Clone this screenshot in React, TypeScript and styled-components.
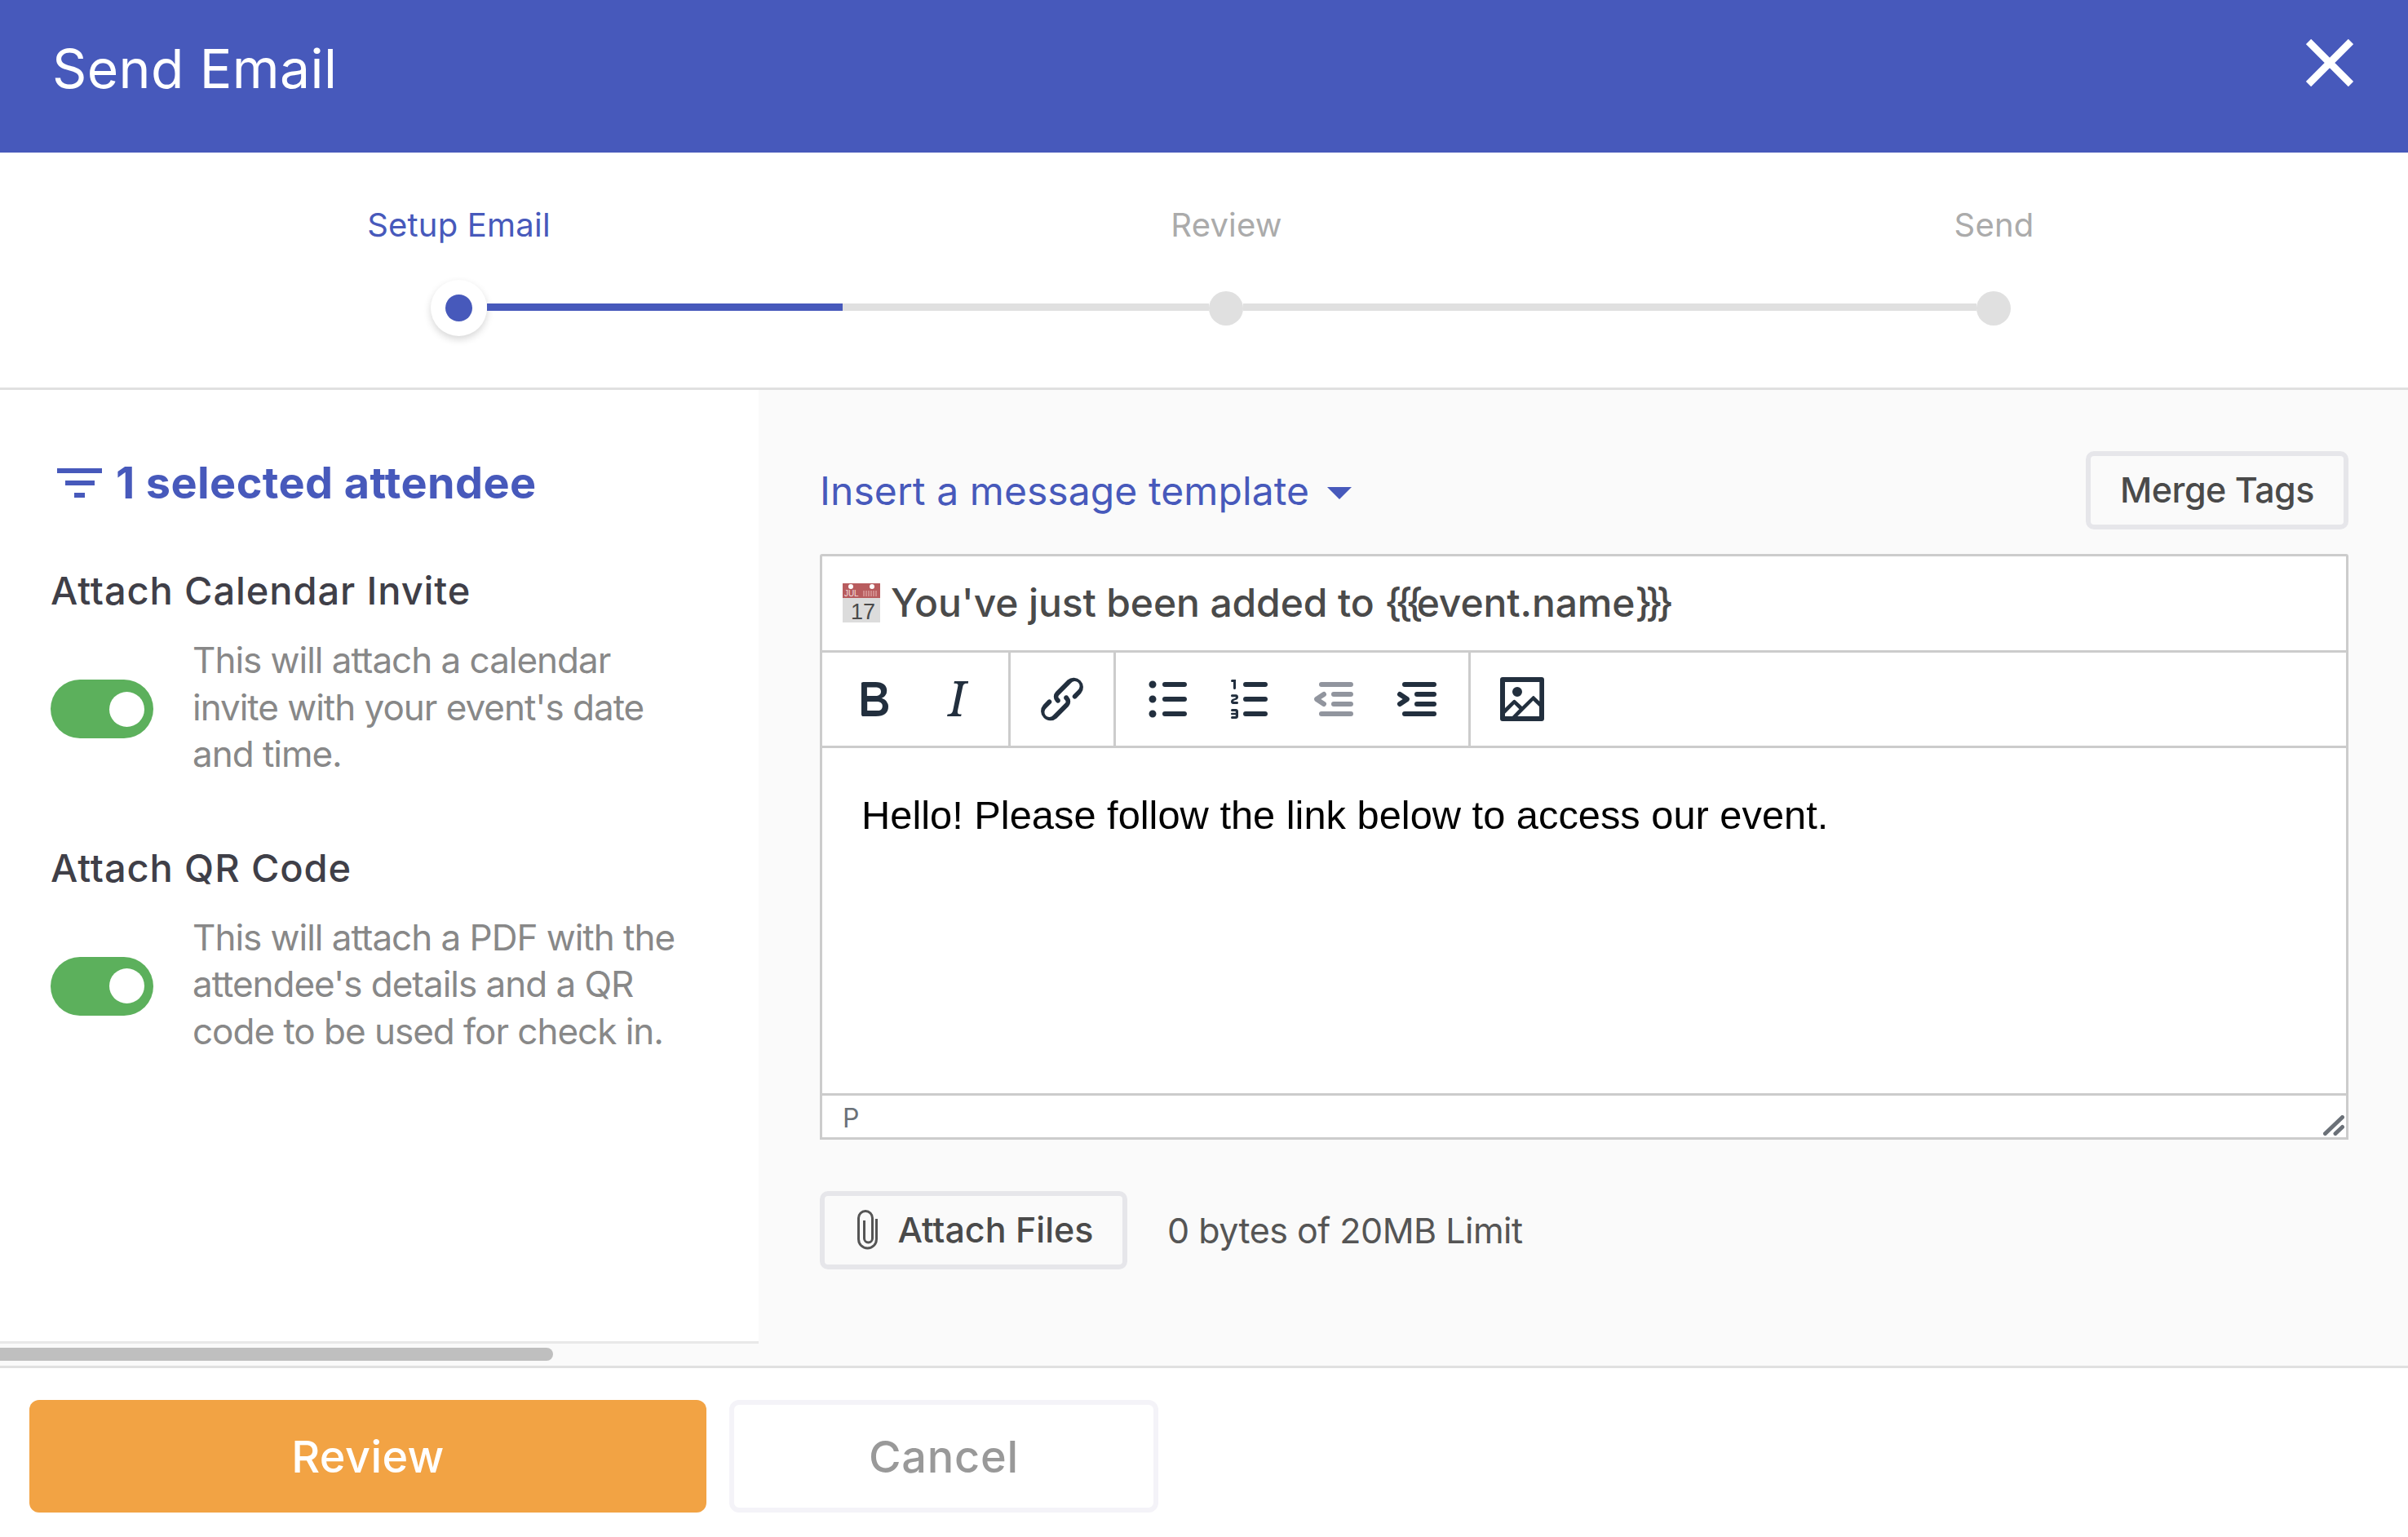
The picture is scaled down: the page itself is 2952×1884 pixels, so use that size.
import styled, { createGlobalStyle } from 'styled-components';

const BLUE = '#4759bb';
const INK = '#222f3e';

const GlobalStyle = createGlobalStyle`
  html, body {
    margin: 0;
    padding: 0;
    background: #fff;
    overflow: hidden;
  }
  body {
    font-family: Inter, "Liberation Sans", sans-serif;
  }
  * {
    box-sizing: border-box;
  }
`;

const Page = styled.div`
  display: flex;
  flex-direction: column;
  width: 2952px;
  height: 1884px;
`;

const Header = styled.header`
  display: flex;
  justify-content: space-between;
  align-items: flex-start;
  height: 187px;
  padding: 42px 67px 0 64px;
  background: ${BLUE};
`;

const Title = styled.h1`
  margin: 0;
  font-size: 66px;
  line-height: 84px;
  font-weight: 400;
  letter-spacing: 0.4px;
  color: #fff;
`;

const CloseIcon = styled.svg`
  display: block;
  width: 58px;
  height: 58px;
  margin-top: 6px;
`;

const Stepper = styled.section`
  display: flex;
  flex-direction: column;
  height: 291px;
  padding-top: 64px;
  border-bottom: 3px solid #e0e0e0;
`;

const StepLabels = styled.div`
  display: grid;
  grid-template-columns: repeat(3, 941px);
  padding-left: 92px;
`;

const StepLabel = styled.span<{ $active?: boolean }>`
  text-align: center;
  font-size: 40px;
  line-height: 50px;
  letter-spacing: 0.2px;
  color: ${(p) => (p.$active ? BLUE : '#ababab')};
`;

const Rail = styled.div`
  display: flex;
  align-items: center;
  width: 1937px;
  margin: 42px 0 0 528px;
`;

const CurrentDot = styled.div`
  display: flex;
  align-items: center;
  justify-content: center;
  flex: none;
  width: 69px;
  height: 69px;
  border-radius: 50%;
  background: #fff;
  box-shadow: 0 4px 10px rgba(0, 0, 0, 0.16);

  &::after {
    content: '';
    width: 33px;
    height: 33px;
    border-radius: 50%;
    background: ${BLUE};
  }
`;

const PendingDot = styled.div`
  flex: none;
  width: 42px;
  height: 42px;
  border-radius: 50%;
  background: #e0e0e0;
`;

const RailLine = styled.div<{ $length: number }>`
  flex: none;
  width: ${(p) => p.$length}px;
  height: 9px;
  margin-top: -2px;
  background: #e0e0e0;
`;

const RailFill = styled.div`
  height: 100%;
  background: ${BLUE};
`;

const Main = styled.main`
  display: flex;
  height: 1196px;
`;

const Side = styled.aside`
  display: flex;
  flex-direction: column;
  flex: none;
  width: 930px;
  background: #fff;
`;

const SideContent = styled.div`
  flex: 1;
  padding: 88px 0 0 62px;
`;

const SelectedRow = styled.div`
  display: flex;
  align-items: center;
  gap: 17px;
  height: 52px;
  margin-bottom: 2px;
  padding-left: 8px;
  color: ${BLUE};
`;

const SelectedText = styled.span`
  font-size: 54px;
  line-height: 52px;
  font-weight: 700;
  letter-spacing: 0.4px;
`;

const Option = styled.div`
  margin-top: 76px;
`;

const OptionTitle = styled.h2`
  margin: 0 0 27px;
  font-size: 47px;
  line-height: 60px;
  font-weight: 500;
  letter-spacing: 0.9px;
  color: #3f3f48;
`;

const OptionBody = styled.div`
  display: flex;
  align-items: center;
  gap: 48px;
`;

const Toggle = styled.div`
  display: flex;
  align-items: center;
  justify-content: flex-end;
  flex: none;
  width: 126px;
  height: 72px;
  padding-right: 11px;
  border-radius: 36px;
  background: #5cb05c;

  &::after {
    content: '';
    width: 43px;
    height: 43px;
    border-radius: 50%;
    background: #fff;
  }
`;

const OptionText = styled.p`
  margin: 0 0 4px;
  font-size: 44px;
  line-height: 57.5px;
  letter-spacing: -1.02px;
  color: #888;
`;

const ScrollStrip = styled.div`
  flex: none;
  height: 30px;
  padding-top: 5px;
  border-top: 3px solid #e8e8e8;
  background: #fafafa;
`;

const ScrollThumb = styled.div`
  width: 678px;
  height: 16px;
  border-radius: 0 8px 8px 0;
  background: #bfbfbf;
`;

const Content = styled.div`
  flex: 1;
  padding: 75px 73px 0 75px;
  background: #fafafa;
`;

const TemplateRow = styled.div`
  display: flex;
  justify-content: space-between;
  align-items: center;
`;

const TemplateLink = styled.div`
  display: flex;
  align-items: center;
  gap: 22px;
  font-size: 48px;
  letter-spacing: 0.08px;
  color: ${BLUE};
`;

const Caret = styled.span`
  width: 0;
  height: 0;
  margin-top: 6px;
  border-left: 15px solid transparent;
  border-right: 15px solid transparent;
  border-top: 15px solid ${BLUE};
`;

const OutlineButton = styled.div`
  display: flex;
  align-items: center;
  justify-content: center;
  height: 96px;
  padding-bottom: 2px;
  border: 6px solid #e6e6ea;
  border-radius: 10px;
  font-size: 43px;
  font-weight: 500;
  color: #4a4a4a;
`;

const MergeButton = styled(OutlineButton)`
  width: 322px;
  letter-spacing: -0.5px;
`;

const Editor = styled.div`
  margin-top: 30px;
  border: 3px solid #ccc;
  border-radius: 3px 3px 0 0;
  background: #fff;
`;

const Subject = styled.div`
  display: flex;
  align-items: center;
  gap: 13px;
  height: 118px;
  padding: 0 0 2px 25px;
  border-bottom: 3px solid #ccc;
  font-size: 48px;
  font-weight: 500;
  letter-spacing: -0.12px;
  color: #4a4a4a;
`;

const Braces = styled.span`
  letter-spacing: -8px;
`;

const Toolbar = styled.div`
  display: flex;
  height: 117px;
  border-bottom: 3px solid #ccc;
`;

const ToolGroup = styled.div`
  display: flex;
  align-items: center;
  gap: 30px;
  padding: 0 27px;
  border-right: 3px solid #ccc;

  &:last-child {
    border-right: 0;
  }
`;

const ToolIcon = styled.svg<{ $muted?: boolean }>`
  display: block;
  width: 72px;
  height: 72px;
  fill: ${(p) => (p.$muted ? '#91959e' : INK)};
`;

const EditorBody = styled.div`
  height: 426px;
  padding: 49px 48px 0;
  border-bottom: 3px solid #ccc;
  font-family: "Liberation Sans", Arial, sans-serif;
  font-size: 48.8px;
  line-height: 66px;
  color: #000;
`;

const StatusBar = styled.div`
  display: flex;
  justify-content: space-between;
  align-items: flex-end;
  height: 51px;
  padding: 0 2px 2px 25px;
  font-size: 32px;
  line-height: 42px;
  color: #6b7178;
`;

const AttachRow = styled.div`
  display: flex;
  align-items: center;
  gap: 49px;
  margin-top: 63px;
`;

const AttachButton = styled(OutlineButton)`
  gap: 25px;
  width: 377px;
  padding-left: 4px;
`;

const AttachLimit = styled.span`
  font-size: 43px;
  letter-spacing: -0.5px;
  color: #555;
`;

const Footer = styled.footer`
  display: flex;
  gap: 28px;
  height: 207px;
  padding: 39px 36px;
  border-top: 3px solid #e0e0e0;
`;

const PrimaryButton = styled.div`
  display: flex;
  align-items: center;
  justify-content: center;
  width: 830px;
  height: 138px;
  border-radius: 12px;
  background: #f2a344;
  font-size: 54px;
  font-weight: 500;
  letter-spacing: 0.4px;
  color: #fff;
`;

const CancelButton = styled(PrimaryButton)`
  width: 526px;
  border: 6px solid #f4f3f8;
  background: #fff;
  letter-spacing: 0.8px;
  color: #999;
`;

const ICONS = {
  bold: 'M7.8 19c-.3 0-.5 0-.6-.2l-.2-.5V5.7c0-.2 0-.4.2-.5l.6-.2h5c1.5 0 2.7.3 3.5 1 .7.6 1.1 1.4 1.1 2.5a3 3 0 0 1-.6 1.9c-.4.6-1 1-1.6 1.2.4.1.9.3 1.3.6s.8.7 1 1.2c.4.4.5 1 .5 1.6 0 1.3-.4 2.3-1.3 3-.8.7-2.1 1-3.8 1H7.8zm5-8.3c.6 0 1.2-.1 1.6-.5.4-.3.6-.7.6-1.3 0-1.1-.8-1.7-2.4-1.7H9.3v3.500h3.500zm.5 6c.7 0 1.300-.1 1.700-.4.4-.4.6-.9.6-1.500s-.2-1-.7-1.400c-.4-.3-1-.4-2-.4H9.400v3.700h3.900z',
  italic: 'M16.7 4.700l-.1.9h-.3c-.6 0-1 0-1.400.3-.3.3-.4.6-.5 1.100l-2.100 9.800v.6c0 .5.4.8 1.400.8h.2l-.2.8H8l.2-.8h.2c1.100 0 1.800-.5 2-1.500l2-9.800.1-.5c0-.6-.4-.8-1.400-.8h-.3l.2-.9h5.800z',
  link: 'M6.200 12.300a1 1 0 0 1 1.400 1.400l-2 2a2 2 0 1 0 2.800 2.800l4.800-4.800a1 1 0 0 0 0-1.400 1 1 0 1 1 1.400-1.300 2.900 2.900 0 0 1 0 4L9.800 19.800a3.900 3.900 0 0 1-5.500-5.500l1.900-2zm11.600-.6a1 1 0 0 1-1.400-1.400l2-2a2 2 0 1 0-2.800-2.800L10.800 10.300a1 1 0 0 0 0 1.400A1 1 0 1 1 9.400 13a2.900 2.900 0 0 1 0-4l4.800-4.800a3.900 3.900 0 0 1 5.500 5.500l-1.900 2z',
  bullets: 'M11 5h8c.6 0 1 .4 1 1s-.4 1-1 1h-8a1 1 0 0 1 0-2zm0 6h8c.6 0 1 .4 1 1s-.4 1-1 1h-8a1 1 0 0 1 0-2zm0 6h8c.6 0 1 .4 1 1s-.4 1-1 1h-8a1 1 0 0 1 0-2zM4.500 6a1.500 1.500 0 1 0 3 0 1.500 1.500 0 1 0-3 0zm0 6a1.500 1.500 0 1 0 3 0 1.500 1.500 0 1 0-3 0zm0 6a1.500 1.500 0 1 0 3 0 1.500 1.500 0 1 0-3 0z',
  numbers: 'M10 17h8c.6 0 1 .4 1 1s-.4 1-1 1h-8a1 1 0 0 1 0-2zm0-6h8c.6 0 1 .4 1 1s-.4 1-1 1h-8a1 1 0 0 1 0-2zm0-6h8c.6 0 1 .4 1 1s-.4 1-1 1h-8a1 1 0 1 1 0-2zM6 4v3.500c0 .3-.2.500-.5.500a.5.500 0 0 1-.5-.5V5h-.5a.5.500 0 0 1 0-1H6zm-1 8.800l.2.200h1.300c.3 0 .5.200.5.500s-.2.500-.5.500H4.900a1 1 0 0 1-.9-1V13c0-.4.3-.8.6-1l1.200-.4.200-.3a.2.200 0 0 0-.2-.2H4.500a.5.500 0 0 1-.5-.5c0-.3.200-.5.500-.5h1.600c.5 0 .9.400.9 1v.1c0 .4-.3.800-.6 1l-1.200.4-.2.300zM7 17v2c0 .6-.4 1-1 1H4.500a.5.500 0 0 1 0-1h1.200c.2 0 .3-.1.3-.3 0-.2-.1-.3-.3-.3H4.400a.4.400 0 1 1 0-.8h1.300c.2 0 .3-.1.3-.3 0-.2-.1-.3-.3-.3H4.500a.5.500 0 1 1 0-1H6c.6 0 1 .4 1 1z',
  outdent: 'M7 5h12c.6 0 1 .4 1 1s-.4 1-1 1H7a1 1 0 1 1 0-2zm5 4h7c.6 0 1 .4 1 1s-.4 1-1 1h-7a1 1 0 0 1 0-2zm0 4h7c.6 0 1 .4 1 1s-.4 1-1 1h-7a1 1 0 0 1 0-2zm-5 4h12a1 1 0 0 1 0 2H7a1 1 0 0 1 0-2zm1.600-3.800a1 1 0 0 1-1.200 1.600l-3-2a1 1 0 0 1 0-1.600l3-2a1 1 0 0 1 1.200 1.600L6.800 12l1.800 1.200z',
  indent: 'M7 5h12c.6 0 1 .4 1 1s-.4 1-1 1H7a1 1 0 1 1 0-2zm5 4h7c.6 0 1 .4 1 1s-.4 1-1 1h-7a1 1 0 0 1 0-2zm0 4h7c.6 0 1 .4 1 1s-.4 1-1 1h-7a1 1 0 0 1 0-2zm-5 4h12a1 1 0 0 1 0 2H7a1 1 0 0 1 0-2zm-2.600-3.800L6.200 12l-1.800-1.200a1 1 0 0 1 1.200-1.600l3 2a1 1 0 0 1 0 1.600l-3 2a1 1 0 1 1-1.200-1.600z',
  image: 'M5 15.700l3.300-3.200c.3-.3.700-.3 1 0L12 15l4.100-4c.3-.4.800-.4 1 0l2 1.900V5H5v10.700zM5 18v1h3l2.800-2.900-2-2L5 17.900zm14-3l-2.500-2.400-6.400 6.400H19v-4zM4 3h16c.6 0 1 .4 1 1v16c0 .6-.4 1-1 1H4a1 1 0 0 1-1-1V4c0-.6.4-1 1-1zm6 8a2 2 0 1 0 0-4 2 2 0 0 0 0 4z',
};

const Tool = ({ d, muted }: { d: string; muted?: boolean }) => (
  <ToolIcon viewBox="0 0 24 24" $muted={muted}>
    <path fillRule="evenodd" d={d} />
  </ToolIcon>
);

const FilterIcon = () => (
  <svg width="55" height="36" viewBox="0 0 55 36" fill={BLUE}>
    <rect x="0" y="0" width="55" height="6" />
    <rect x="10" y="15" width="36" height="6" />
    <rect x="21" y="30" width="13" height="6" />
  </svg>
);

const CalendarEmoji = () => (
  <svg width="46" height="48" viewBox="0 0 46 48">
    <rect width="46" height="48" fill="#dcdcdc" />
    <rect width="46" height="18" fill="#b85c5e" />
    <circle cx="10" cy="4" r="3" fill="#fff" />
    <circle cx="36" cy="4" r="3" fill="#fff" />
    <text x="2" y="16" fontSize="10" fill="#f3dede" fontFamily="Liberation Sans, sans-serif">
      JUL
    </text>
    <path d="M26 9v7M29 9v7M32 9v7M35 9v7M38 9v7M41 9v7" stroke="#d99b9b" strokeWidth="1.500" />
    <text x="10" y="44" fontSize="27" fill="#4a4a4a" fontFamily="Liberation Sans, sans-serif">
      17
    </text>
  </svg>
);

const PaperclipIcon = () => (
  <svg width="25" height="49" viewBox="0 0 25 49" fill="none" stroke="#555" strokeWidth="3">
    <path d="M23.500 11V36a11 11 0 0 1-22 0V10a8.500 8.500 0 0 1 17 0V35a5 5 0 0 1-10 0V13" />
  </svg>
);

const ResizeHandle = () => (
  <svg width="26" height="25" viewBox="0 0 26 25" stroke="#6b7178" strokeWidth="5" strokeLinecap="round">
    <path d="M2.500 22.500L23.500 2.500M15 22.500L23.500 14.500" />
  </svg>
);

const App = () => (
  <Page>
    <GlobalStyle />
    <Header>
      <Title>Send Email</Title>
      <CloseIcon viewBox="0 0 58 58" stroke="#fff" strokeWidth="9">
        <path d="M3 3L55 55M55 3L3 55" />
      </CloseIcon>
    </Header>

    <Stepper>
      <StepLabels>
        <StepLabel $active>Setup Email</StepLabel>
        <StepLabel>Review</StepLabel>
        <StepLabel>Send</StepLabel>
      </StepLabels>
      <Rail>
        <CurrentDot />
        <RailLine $length={885}>
          <RailFill style={{ width: 436 }} />
        </RailLine>
        <PendingDot />
        <RailLine $length={899} />
        <PendingDot />
      </Rail>
    </Stepper>

    <Main>
      <Side>
        <SideContent>
          <SelectedRow>
            <FilterIcon />
            <SelectedText>1 selected attendee</SelectedText>
          </SelectedRow>
          <Option>
            <OptionTitle>Attach Calendar Invite</OptionTitle>
            <OptionBody>
              <Toggle />
              <OptionText>
                This will attach a calendar
                <br />
                invite with your event's date
                <br />
                and time.
              </OptionText>
            </OptionBody>
          </Option>
          <Option>
            <OptionTitle>Attach QR Code</OptionTitle>
            <OptionBody>
              <Toggle />
              <OptionText>
                This will attach a PDF with the
                <br />
                attendee's details and a QR
                <br />
                code to be used for check in.
              </OptionText>
            </OptionBody>
          </Option>
        </SideContent>
        <ScrollStrip>
          <ScrollThumb />
        </ScrollStrip>
      </Side>

      <Content>
        <TemplateRow>
          <TemplateLink>
            Insert a message template
            <Caret />
          </TemplateLink>
          <MergeButton>Merge Tags</MergeButton>
        </TemplateRow>

        <Editor>
          <Subject>
            <CalendarEmoji />
            <span>
              You've just been added to <Braces>{'{{{'}</Braces>event.name<Braces>{'}}}'}</Braces>
            </span>
          </Subject>
          <Toolbar>
            <ToolGroup>
              <Tool d={ICONS.bold} />
              <Tool d={ICONS.italic} />
            </ToolGroup>
            <ToolGroup>
              <Tool d={ICONS.link} />
            </ToolGroup>
            <ToolGroup>
              <Tool d={ICONS.bullets} />
              <Tool d={ICONS.numbers} />
              <Tool d={ICONS.outdent} muted />
              <Tool d={ICONS.indent} />
            </ToolGroup>
            <ToolGroup>
              <Tool d={ICONS.image} />
            </ToolGroup>
          </Toolbar>
          <EditorBody>Hello! Please follow the link below to access our event.</EditorBody>
          <StatusBar>
            <span>P</span>
            <ResizeHandle />
          </StatusBar>
        </Editor>

        <AttachRow>
          <AttachButton>
            <PaperclipIcon />
            Attach Files
          </AttachButton>
          <AttachLimit>0 bytes of 20MB Limit</AttachLimit>
        </AttachRow>
      </Content>
    </Main>

    <Footer>
      <PrimaryButton>Review</PrimaryButton>
      <CancelButton>Cancel</CancelButton>
    </Footer>
  </Page>
);

export default App;
